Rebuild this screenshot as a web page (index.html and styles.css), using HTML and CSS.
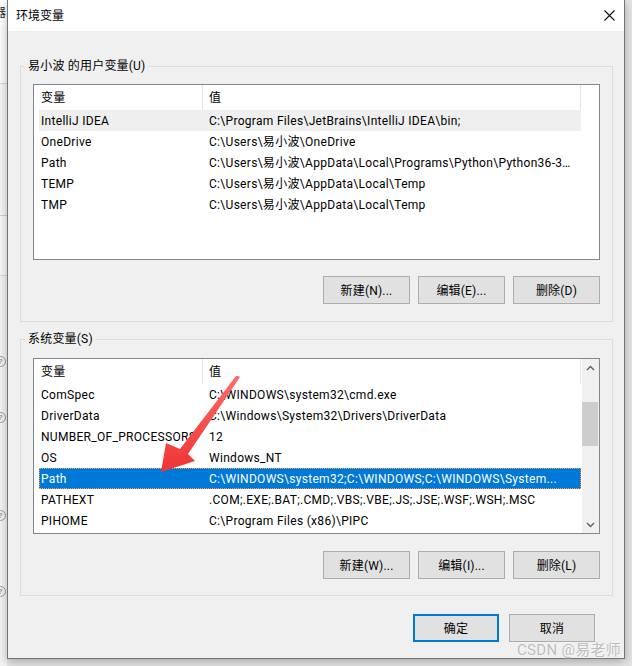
FILE: index.html
```html
<!DOCTYPE html>
<html lang="zh-CN">
<head>
<meta charset="utf-8">
<title>环境变量</title>
<link rel="stylesheet" href="styles.css">
</head>
<body>
<div class="screen">
  <div class="desk-left">
    <div class="dl-top"><span class="dl-char">器</span></div>
    <div class="dl-white"></div>
    <div class="dl-gray"></div>
    <div class="dl-white2"></div>
    <div class="dl-rest">
      <span class="help h1">?</span>
      <span class="help h2">?</span>
      <span class="help h3">?</span>
      <span class="help h4">?</span>
    </div>
  </div>
  <div class="dialog">
    <div class="titlebar">
      <span class="title">环境变量</span>
      <svg class="close" width="11" height="11" viewBox="0 0 11 11"><path d="M0.5 0.5L10.5 10.5M10.5 0.5L0.5 10.5" stroke="#111" stroke-width="1.1" fill="none"/></svg>
    </div>
    <div class="dlg-body">
      <div class="group">
        <div class="legend">易小波 的用户变量(U)</div>
        <div class="list">
          <div class="lv-main">
            <div class="lv-header"><div class="hc hc1">变量</div><div class="hc hc2">值</div></div>
            <div class="lv-row hover"><div class="c1">IntelliJ IDEA</div><div class="c2">C:\Program Files\JetBrains\IntelliJ IDEA\bin;</div></div>
            <div class="lv-row"><div class="c1">OneDrive</div><div class="c2">C:\Users\易小波\OneDrive</div></div>
            <div class="lv-row"><div class="c1">Path</div><div class="c2">C:\Users\易小波\AppData\Local\Programs\Python\Python36-32\Scripts\;C:\Users\易小波\AppData\Local\Programs\Python\Python36-32\</div></div>
            <div class="lv-row"><div class="c1">TEMP</div><div class="c2">C:\Users\易小波\AppData\Local\Temp</div></div>
            <div class="lv-row"><div class="c1">TMP</div><div class="c2">C:\Users\易小波\AppData\Local\Temp</div></div>
          </div>
        </div>
        <div class="btn-row">
          <button class="btn">新建(N)...</button>
          <button class="btn">编辑(E)...</button>
          <button class="btn">删除(D)</button>
        </div>
      </div>

      <div class="group group-sys">
        <div class="legend">系统变量(S)</div>
        <div class="list">
          <div class="lv-main narrow">
            <div class="lv-header"><div class="hc hc1">变量</div><div class="hc hc2">值</div></div>
            <div class="lv-row"><div class="c1">ComSpec</div><div class="c2">C:\WINDOWS\system32\cmd.exe</div></div>
            <div class="lv-row"><div class="c1">DriverData</div><div class="c2">C:\Windows\System32\Drivers\DriverData</div></div>
            <div class="lv-row"><div class="c1">NUMBER_OF_PROCESSORS</div><div class="c2">12</div></div>
            <div class="lv-row"><div class="c1">OS</div><div class="c2">Windows_NT</div></div>
            <div class="lv-row selected"><div class="c1">Path</div><div class="c2">C:\WINDOWS\system32;C:\WINDOWS;C:\WINDOWS\System...</div></div>
            <div class="lv-row"><div class="c1">PATHEXT</div><div class="c2">.COM;.EXE;.BAT;.CMD;.VBS;.VBE;.JS;.JSE;.WSF;.WSH;.MSC</div></div>
            <div class="lv-row"><div class="c1">PIHOME</div><div class="c2">C:\Program Files (x86)\PIPC</div></div>
          </div>
          <div class="sb">
            <div class="sb-btn"><svg width="9" height="6" viewBox="0 0 9 6"><path d="M1 5L4.5 1.5L8 5" stroke="#606060" stroke-width="1.4" fill="none"/></svg></div>
            <div class="sb-track"><div class="thumb"></div></div>
            <div class="sb-btn"><svg width="9" height="6" viewBox="0 0 9 6"><path d="M1 1L4.5 4.5L8 1" stroke="#606060" stroke-width="1.4" fill="none"/></svg></div>
          </div>
        </div>
        <div class="btn-row">
          <button class="btn">新建(W)...</button>
          <button class="btn">编辑(I)...</button>
          <button class="btn">删除(L)</button>
        </div>
      </div>

      <div class="footer">
        <button class="btn btn-ok">确定</button>
        <button class="btn">取消</button>
      </div>
    </div>
  </div>
  <div class="desk-right"></div>
</div>

<svg class="arrow" width="632" height="666" viewBox="0 0 632 666">
  <defs>
    <linearGradient id="ag" x1="0" y1="0" x2="0" y2="1">
      <stop offset="0" stop-color="#ff6a6a"/>
      <stop offset="1" stop-color="#ee3434"/>
    </linearGradient>
  </defs>
  <polygon points="238,376 240,377 188,454 195,461 161,472 166,443 180,449 236,376" fill="url(#ag)"/>
</svg>
<div class="watermark">CSDN @易老师</div>
</body>
</html>
```

FILE: styles.css
```css
* { box-sizing: border-box; }
html, body { margin: 0; padding: 0; }
body {
  width: 632px;
  height: 666px;
  overflow: hidden;
  position: relative;
  background: #e8e8e8;
  font-family: Roboto, "Noto Sans CJK SC", sans-serif;
  font-size: 12px;
  color: #000;
}
.screen { display: flex; height: 666px; }

/* background desktop strip */
.desk-left {
  width: 7px;
  flex: none;
  overflow: hidden;
  display: flex;
  flex-direction: column;
  background: #f3f3f3;
}
.dl-top { height: 26px; background: #fff; line-height: 26px; white-space: nowrap; }
.dl-char { display: inline-block; margin-left: -6px; font-size: 12px; color: #222; }
.dl-white { height: 58px; background: #fbfbfb; border-bottom: 1px solid #d4d4d4; }
.dl-gray { height: 132px; background: #f5f5f5; border-bottom: 1px solid #cfcfcf; }
.dl-white2 { height: 60px; background: #f7f7f7; border-bottom: 1px solid #dcdcdc; }
.dl-rest { flex: 1; display: flex; flex-direction: column; background: #f3f3f3; }
.help {
  display: block;
  width: 11px;
  height: 11px;
  margin-left: -5px;
  border: 1px solid #9a9a9a;
  border-radius: 50%;
  font-size: 8px;
  line-height: 9px;
  text-align: center;
  color: #777;
}
.h1 { margin-top: 80px; }
.h2 { margin-top: 45px; }
.h3 { margin-top: 87px; }
.h4 { margin-top: 65px; }

.desk-right { flex: 1; background: #e4e4e4; }

/* dialog */
.dialog {
  width: 618px;
  height: 659px;
  flex: none;
  background: #f0f0f0;
  border: 1px solid #747474;
  border-top: none;
  display: flex;
  flex-direction: column;
  box-shadow: 0 3px 9px rgba(0, 0, 0, 0.28);
  position: relative;
  z-index: 1;
}
.titlebar {
  height: 31px;
  flex: none;
  background: #fff;
  display: flex;
  align-items: center;
  justify-content: space-between;
  padding: 0 9px 0 8px;
}
.title { line-height: 16px; }
.close { display: block; }

.dlg-body { flex: 1; padding: 0 11px 0 12px; }

.group {
  margin-top: 35px;
  border: 1px solid #dcdcdc;
  padding: 0 12px 17px 12px;
}
.group-sys { margin-top: 17px; padding-bottom: 16px; }
.legend {
  width: fit-content;
  height: 16px;
  line-height: 16px;
  margin: -9px 0 0 -8px;
  padding: 0 3px;
  background: #f0f0f0;
  letter-spacing: 0.2px;
}

.list {
  margin-top: 10px;
  height: 176px;
  border: 1px solid #828790;
  background: #fff;
  display: flex;
  letter-spacing: 0.3px;
}
.group-sys .list { margin-top: 11px; }
.lv-main { flex: 1; overflow: hidden; }
.lv-main.narrow { flex: none; width: 548px; }

.lv-header { height: 25px; display: flex; }
.hc {
  line-height: 24px;
  padding-top: 1px;
  border-right: 1px solid #e5e5e5;
  white-space: nowrap;
}
.hc1 { width: 169px; padding-left: 7px; }
.hc2 { width: 378px; padding-left: 6px; }

.lv-row {
  display: flex;
  width: 542px;
  height: 21px;
  line-height: 20px;
  padding-top: 1px;
  margin-left: 5px;
  white-space: nowrap;
}
.c1 { width: 164px; flex: none; padding-left: 2px; overflow: hidden; }
.c2 {
  width: 378px;
  flex: none;
  padding-left: 6px;
  padding-right: 4px;
  overflow: hidden;
  text-overflow: ellipsis;
}
.lv-row.hover { background: #efefef; }
.lv-row.selected {
  background: #0078d7;
  color: #fff;
  outline: 1px dotted #f0a040;
  outline-offset: -1px;
}

.sb {
  width: 17px;
  flex: none;
  background: #f0f0f0;
  display: flex;
  flex-direction: column;
}
.sb-btn {
  height: 17px;
  flex: none;
  display: flex;
  align-items: center;
  justify-content: center;
}
.sb-btn svg { display: block; }
.sb-track { flex: 1; padding-top: 26px; }
.thumb { height: 44px; background: #cdcdcd; margin-right: 1px; }

.btn-row {
  display: flex;
  justify-content: flex-end;
  gap: 8px;
  margin-top: 16px;
}
.group-sys .btn-row { margin-top: 17px; }
.btn {
  width: 87px;
  height: 28px;
  padding: 0 0 2px 0;
  margin: 0;
  border: 1px solid #adadad;
  background: #e1e1e1;
  font: inherit;
  letter-spacing: 0.2px;
  color: #000;
  display: flex;
  align-items: center;
  justify-content: center;
}
.footer {
  display: flex;
  justify-content: flex-end;
  gap: 10px;
  margin-top: 18px;
  padding-right: 18px;
}
.footer .btn { width: 86px; }
.btn-ok { border: 2px solid #0078d7; }

.arrow {
  position: absolute;
  left: 0;
  top: 0;
  z-index: 5;
  pointer-events: none;
}
.watermark {
  position: absolute;
  left: 517px;
  top: 641px;
  z-index: 6;
  font-size: 15px;
  line-height: 18px;
  letter-spacing: 0.3px;
  color: #bdbdbd;
  text-shadow: 0 0 2px #fff;
  white-space: nowrap;
}
```
